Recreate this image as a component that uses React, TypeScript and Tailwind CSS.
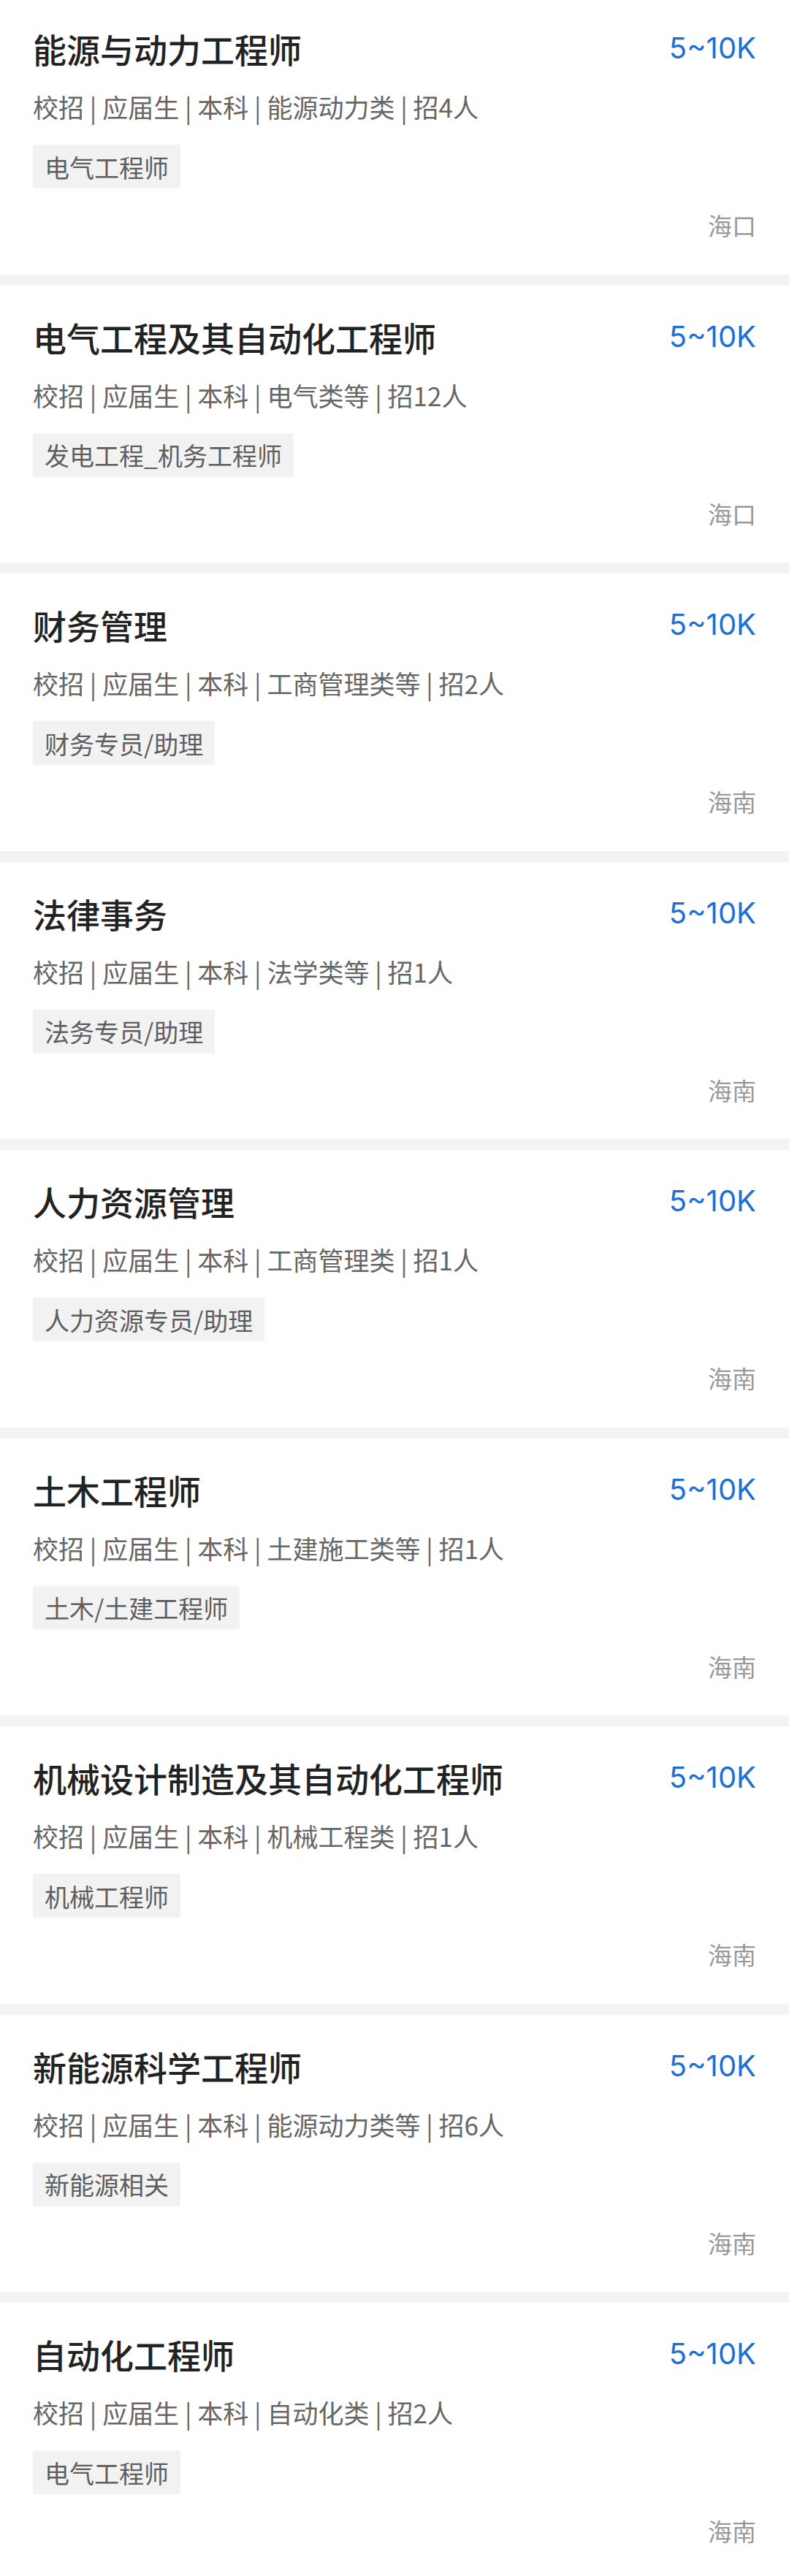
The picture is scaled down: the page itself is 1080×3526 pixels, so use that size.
const jobs = [
  { title: "能源与动力工程师", major: "能源动力类", count: 4, tag: "电气工程师", city: "海口" },
  { title: "电气工程及其自动化工程师", major: "电气类等", count: 12, tag: "发电工程_机务工程师", city: "海口" },
  { title: "财务管理", major: "工商管理类等", count: 2, tag: "财务专员/助理", city: "海南" },
  { title: "法律事务", major: "法学类等", count: 1, tag: "法务专员/助理", city: "海南" },
  { title: "人力资源管理", major: "工商管理类", count: 1, tag: "人力资源专员/助理", city: "海南" },
  { title: "土木工程师", major: "土建施工类等", count: 1, tag: "土木/土建工程师", city: "海南" },
  { title: "机械设计制造及其自动化工程师", major: "机械工程类", count: 1, tag: "机械工程师", city: "海南" },
  { title: "新能源科学工程师", major: "能源动力类等", count: 6, tag: "新能源相关", city: "海南" },
  { title: "自动化工程师", major: "自动化类", count: 2, tag: "电气工程师", city: "海南" },
];

type Job = (typeof jobs)[number];

function JobCard({ job }: { job: Job }) {
  return (
    <div className="h-[379.5px] bg-white px-[45px] pt-[38px]">
      {/* 标题 + 薪资 */}
      <div className="flex items-center justify-between">
        <span className="text-[46px] leading-[64px] font-medium text-[#222]">{job.title}</span>
        <span className="font-['Inter','Noto_Sans_CJK_SC',sans-serif] text-[40px] leading-[64px] text-[#1d6fd3]">
          5~10K
        </span>
      </div>

      <div className="mt-[23px] text-[35px] leading-[50px] text-[#666]">
        校招 | 应届生 | 本科 | {job.major} | 招{job.count}人
      </div>

      <div className="mt-[27px] flex">
        <span className="flex h-[60px] items-center rounded-[3px] bg-[#f2f2f2] px-4 text-[34px] text-[#5e5e5e]">
          {job.tag}
        </span>
      </div>

      <div className="mt-[26px] text-right text-[33px] leading-[48px] text-[#999]">{job.city}</div>
    </div>
  );
}

export default function App() {
  return (
    <div className="h-[3526px] w-[1080px] overflow-hidden bg-[#f3f3f6] font-['Noto_Sans_CJK_SC','Noto_Sans',sans-serif]">
      <div className="-mt-1 flex flex-col gap-[15px]">
        {jobs.map((job) => (
          <JobCard key={job.title} job={job} />
        ))}
      </div>
    </div>
  );
}
